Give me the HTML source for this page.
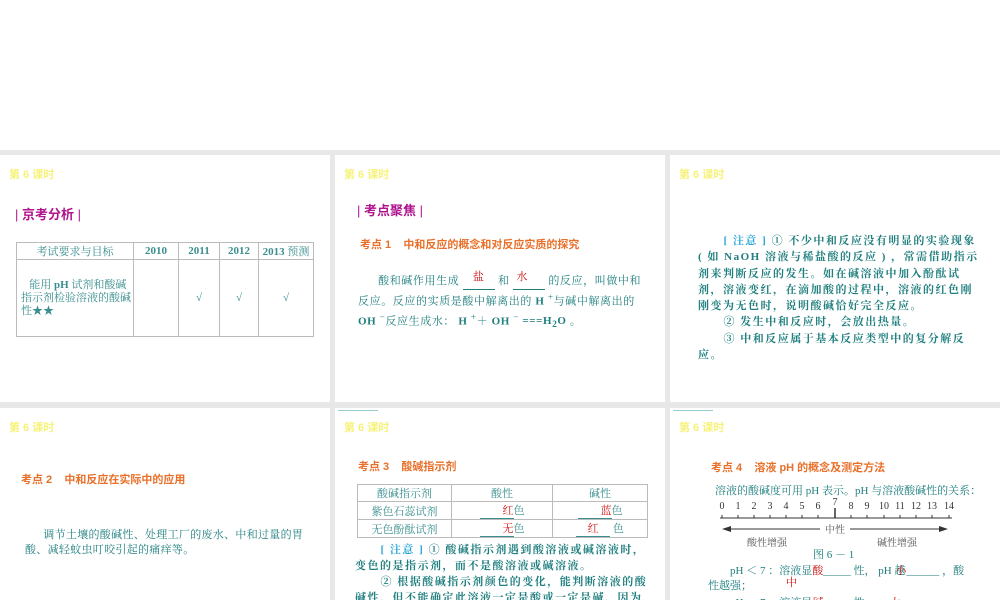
<!DOCTYPE html><html><head><meta charset="utf-8"><style>
body{margin:0;width:1000px;height:600px;background:#fff;position:relative;overflow:hidden;font-family:"Liberation Serif","Noto Serif CJK SC",serif;}
.bg{position:absolute;left:0;top:150px;width:1000px;height:450px;background:#e8e8e8}
.p{position:absolute;background:#fff;overflow:hidden}
.a{position:absolute;white-space:nowrap}
.y{color:#f6f27a;font-family:"Liberation Sans","Noto Sans CJK SC",sans-serif;font-size:11px;font-weight:bold}
.t{color:#1f7e7e;font-size:11px}
.o{color:#e8702a;font-family:"Liberation Sans","Noto Sans CJK SC",sans-serif;font-size:11px;font-weight:bold}
.m{color:#b0138e;font-family:"Liberation Sans","Noto Sans CJK SC",sans-serif;font-size:13px;font-weight:bold}
.r{color:#d01010}
.c{color:#27a7d8;font-weight:bold}
table{border-collapse:collapse;position:absolute}
td{border:1px solid #bbb;color:#3a8e8e;font-size:11px;text-align:center;padding:0}
.u{display:inline-block;border-bottom:1px solid #1f7e7e;width:40px;text-align:right}
.tl{position:absolute;left:3px;top:2px;width:40px;border-top:1px solid #9cc}
.n{font-weight:bold;font-size:11px;letter-spacing:1.5px;line-height:16.3px;white-space:normal}
</style></head><body>
<div class="bg"></div>

<div class="p" style="left:0;top:155px;width:330px;height:247px">
<div class="a y" style="left:9px;top:11px">第 6 课时</div>
<div class="a m" style="left:15px;top:49px"><span style="font-weight:normal">|</span> 京考分析 <span style="font-weight:normal">|</span></div>
<table style="left:16px;top:87px;width:298px">
<tr style="height:16px"><td style="width:116px">考试要求与目标</td><td style="width:44px;font-weight:bold">2010</td><td style="width:40px;font-weight:bold">2011</td><td style="width:38px;font-weight:bold">2012</td><td><b>2013</b> 预测</td></tr>
<tr style="height:77px"><td style="text-align:left;padding-left:4px;line-height:13px">&nbsp;&nbsp;&nbsp;能用 <b>pH</b> 试剂和酸碱指示剂检验溶液的酸碱性★★</td><td></td><td>√</td><td>√</td><td>√</td></tr>
</table>
</div>

<div class="p" style="left:335px;top:155px;width:330px;height:247px">
<div class="a y" style="left:9px;top:11px">第 6 课时</div>
<div class="a m" style="left:22px;top:45px"><span style="font-weight:normal">|</span> 考点聚焦 <span style="font-weight:normal">|</span></div>
<div class="a o" style="left:25px;top:81px">考点 1 &nbsp;&nbsp; 中和反应的概念和对反应实质的探究</div>
<div class="a t" style="left:23px;top:119px;width:290px;white-space:normal;line-height:15px;letter-spacing:0.6px">&nbsp;&nbsp;&nbsp;&nbsp;&nbsp;&nbsp;酸和碱作用生成 <span class="u" style="width:32px;text-align:center"><span class="r" style="position:relative;top:-4px">盐</span></span> 和 <span class="u" style="width:32px;text-align:left"><span class="r" style="position:relative;top:-4px">&nbsp;水</span></span> 的反应，叫做中和反应。反应的实质是酸中解离出的 <b>H</b> <sup>+</sup>与碱中解离出的<b>OH</b> <sup>−</sup>反应生成水： <b>H</b> <sup>+</sup>＋ <b>OH</b> <sup>−</sup> <b>===H<sub>2</sub>O</b> 。</div>
</div>

<div class="p" style="left:670px;top:155px;width:330px;height:247px">
<div class="a y" style="left:9px;top:11px">第 6 课时</div>
<div class="a t n" style="left:28px;top:78px;width:282px">&nbsp;&nbsp;&nbsp;&nbsp;&nbsp;&nbsp;<span class="c">[ 注意 ]</span> ① 不少中和反应没有明显的实验现象 ( 如 NaOH 溶液与稀盐酸的反应 ) ，常需借助指示剂来判断反应的发生。如在碱溶液中加入酚酞试剂，溶液变红，在滴加酸的过程中，溶液的红色刚刚变为无色时，说明酸碱恰好完全反应。<br>&nbsp;&nbsp;&nbsp;&nbsp;&nbsp;&nbsp;② 发生中和反应时，会放出热量。<br>&nbsp;&nbsp;&nbsp;&nbsp;&nbsp;&nbsp;③ 中和反应属于基本反应类型中的复分解反应。</div>
</div>

<div class="p" style="left:0;top:408px;width:330px;height:192px">
<div class="a y" style="left:9px;top:11px">第 6 课时</div>
<div class="a o" style="left:21px;top:63px">考点 2 &nbsp;&nbsp; 中和反应在实际中的应用</div>
<div class="a t" style="left:25px;top:120px;width:285px;white-space:normal;line-height:15px;letter-spacing:0.3px">&nbsp;&nbsp;&nbsp;&nbsp;&nbsp;&nbsp;调节土壤的酸碱性、处理工厂的废水、中和过量的胃酸、减轻蚊虫叮咬引起的痛痒等。</div>
</div>

<div class="p" style="left:335px;top:408px;width:330px;height:192px">
<div class="tl"></div>
<div class="a y" style="left:9px;top:11px">第 6 课时</div>
<div class="a o" style="left:23px;top:50px">考点 3 &nbsp;&nbsp; 酸碱指示剂</div>
<table style="left:22px;top:76px;width:291px">
<tr style="height:16px"><td style="width:93px">酸碱指示剂</td><td style="width:100px">酸性</td><td>碱性</td></tr>
<tr style="height:16px"><td>紫色石蕊试剂</td><td><span class="u" style="width:34px;border-color:#3a8e8e"><span class="r">红</span></span>色</td><td><span class="u" style="width:34px;border-color:#3a8e8e"><span class="r">蓝</span></span>色</td></tr>
<tr style="height:16px"><td>无色酚酞试剂</td><td><span class="u" style="width:34px;border-color:#3a8e8e"><span class="r">无</span></span>色</td><td><span class="u" style="width:34px;border-color:#3a8e8e;text-align:center"><span class="r">红</span></span> 色</td></tr>
</table>
<div class="a t n" style="left:20px;top:134px;width:295px;line-height:16px">&nbsp;&nbsp;&nbsp;&nbsp;&nbsp;&nbsp;<span class="c">[ 注意 ]</span> ① 酸碱指示剂遇到酸溶液或碱溶液时，变色的是指示剂，而不是酸溶液或碱溶液。<br>&nbsp;&nbsp;&nbsp;&nbsp;&nbsp;&nbsp;② 根据酸碱指示剂颜色的变化，能判断溶液的酸碱性，但不能确定此溶液一定是酸或一定是碱，因为有的盐溶液可</div>
</div>

<div class="p" style="left:670px;top:408px;width:330px;height:192px">
<div class="tl"></div>
<div class="a y" style="left:9px;top:11px">第 6 课时</div>
<div class="a o" style="left:41px;top:51px">考点 4 &nbsp;&nbsp; 溶液 pH 的概念及测定方法</div>
<div class="a t" style="left:45px;top:74px">溶液的酸碱度可用 pH 表示。pH 与溶液酸碱性的关系：</div>
<svg class="a" style="left:45px;top:88px" width="245" height="60">
<g font-family="Liberation Serif" font-size="10" fill="#333" text-anchor="middle">
<text x="7" y="13">0</text><text x="23" y="13">1</text><text x="39" y="13">2</text><text x="55" y="13">3</text><text x="71" y="13">4</text><text x="87" y="13">5</text><text x="103" y="13">6</text><text x="120" y="9">7</text><text x="136" y="13">8</text><text x="152" y="13">9</text><text x="169" y="13">10</text><text x="185" y="13">11</text><text x="201" y="13">12</text><text x="217" y="13">13</text><text x="234" y="13">14</text>
</g>
<line x1="5" y1="22" x2="237" y2="22" stroke="#333"/>
<line x1="120" y1="12" x2="120" y2="22" stroke="#333" stroke-width="1.5"/>
<g stroke="#333"><line x1="7" y1="19" x2="7" y2="22"/><line x1="23" y1="19" x2="23" y2="22"/><line x1="39" y1="19" x2="39" y2="22"/><line x1="55" y1="19" x2="55" y2="22"/><line x1="71" y1="19" x2="71" y2="22"/><line x1="87" y1="19" x2="87" y2="22"/><line x1="103" y1="19" x2="103" y2="22"/><line x1="136" y1="19" x2="136" y2="22"/><line x1="152" y1="19" x2="152" y2="22"/><line x1="169" y1="19" x2="169" y2="22"/><line x1="185" y1="19" x2="185" y2="22"/><line x1="201" y1="19" x2="201" y2="22"/><line x1="217" y1="19" x2="217" y2="22"/><line x1="234" y1="19" x2="234" y2="22"/>
<line x1="10" y1="33" x2="105" y2="33"/><line x1="135" y1="33" x2="230" y2="33"/></g>
<path d="M7 33 L16 30 L16 36Z M233 33 L224 30 L224 36Z" fill="#333"/>
<text x="120" y="37" font-size="10" fill="#555" text-anchor="middle" font-family="Noto Serif CJK SC">中性</text>
<text x="52" y="50" font-size="10" fill="#555" text-anchor="middle" font-family="Noto Serif CJK SC">酸性增强</text>
<text x="182" y="50" font-size="10" fill="#555" text-anchor="middle" font-family="Noto Serif CJK SC">碱性增强</text>
</svg>
<div class="a t" style="left:143px;top:138px">图 6 － 1</div>
<div class="a t" style="left:60px;top:154px">pH ＜ 7 ：溶液显<span class="r">酸</span>_____ 性， pH 越<span class="r" style="margin-left:-10px">小</span>______ ，酸</div>
<div class="a t" style="left:38px;top:169px">性越强；<span class="r" style="margin-left:34px;position:relative;top:-3px">中</span></div>
<div class="a t" style="left:60px;top:186px">pH ＝ 7 ，溶液显<span class="r">碱</span>_____ 性，<span class="r" style="margin-left:14px">大</span></div>
</div>
</body></html>
